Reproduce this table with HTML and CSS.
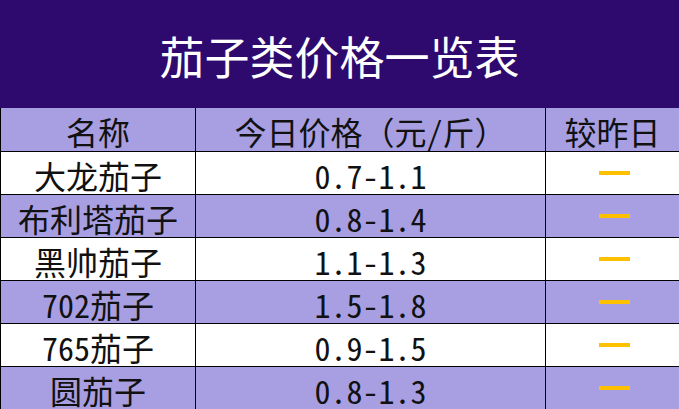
FILE: index.html
```html
<!DOCTYPE html>
<html lang="zh-CN">
<head>
<meta charset="utf-8">
<title>茄子类价格一览表</title>
<link rel="stylesheet" href="styles.css">
</head>
<body>
<div class="sheet">
  <div class="title">茄子类价格一览表</div>
  <div class="row head">
    <div class="cell">名称</div>
    <div class="cell price-head">今日价格（元<span class="num">/</span>斤）</div>
    <div class="cell">较昨日</div>
  </div>
  <div class="row white">
    <div class="cell">大龙茄子</div>
    <div class="cell num">0.7-1.1</div>
    <div class="cell"><span class="dash"></span></div>
  </div>
  <div class="row lav">
    <div class="cell">布利塔茄子</div>
    <div class="cell num">0.8-1.4</div>
    <div class="cell"><span class="dash"></span></div>
  </div>
  <div class="row white">
    <div class="cell">黑帅茄子</div>
    <div class="cell num">1.1-1.3</div>
    <div class="cell"><span class="dash"></span></div>
  </div>
  <div class="row lav">
    <div class="cell"><span class="num">702</span>茄子</div>
    <div class="cell num">1.5-1.8</div>
    <div class="cell"><span class="dash"></span></div>
  </div>
  <div class="row white">
    <div class="cell"><span class="num">765</span>茄子</div>
    <div class="cell num">0.9-1.5</div>
    <div class="cell"><span class="dash"></span></div>
  </div>
  <div class="row lav">
    <div class="cell">圆茄子</div>
    <div class="cell num">0.8-1.3</div>
    <div class="cell"><span class="dash"></span></div>
  </div>
</div>
</body>
</html>
```

FILE: styles.css
```css
html, body {
  margin: 0;
  padding: 0;
  background: #ffffff;
}

.sheet {
  width: 679px;
  height: 409px;
  overflow: hidden;
  font-family: "Noto Sans CJK SC", "Noto Sans", sans-serif;
  color: #111111;
}

.title {
  height: 108px;
  background: #2f0a6e;
  color: #ffffff;
  font-size: 45px;
  display: flex;
  align-items: center;
  justify-content: center;
  padding-top: 2px;
  box-sizing: border-box;
}

.row {
  display: grid;
  grid-template-columns: 194px 350px 1fr;
  height: 43px;
  box-sizing: border-box;
  border-left: 1px solid #000000;
  border-bottom: 1px solid #000000;
}

.row.head {
  height: 44px;
  background: #a89fe3;
}

.row.lav {
  background: #a89fe3;
}

.row.white {
  background: #ffffff;
}

.cell {
  display: flex;
  align-items: center;
  justify-content: center;
  font-size: 32px;
  line-height: 1;
  padding-top: 3px;
  box-sizing: border-box;
  white-space: nowrap;
}

.cell + .cell {
  border-left: 1px solid #000000;
}

.num {
  font-feature-settings: "hwid" 1;
}

.price-head {
  font-size: 32px;
}

.dash {
  display: block;
  width: 31px;
  height: 4px;
  background: #ffc000;
  margin-left: 3px;
  margin-top: -3px;
}
```
